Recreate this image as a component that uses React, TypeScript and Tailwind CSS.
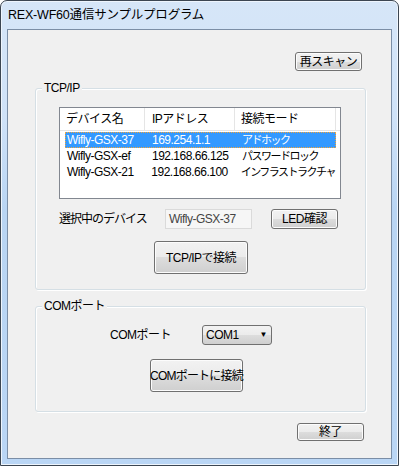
const font = { fontFamily: '"Liberation Sans", "Noto Sans CJK JP", sans-serif' };

function WinButton({ label, className }: { label: string; className: string }) {
  return (
    <button
      className={`flex items-center justify-center whitespace-nowrap rounded-[3px] border border-[#707070] text-[12px] text-black shadow-[inset_0_0_0_1px_#fcfcfc] bg-[linear-gradient(to_bottom,#f2f2f2_0%,#ebebeb_50%,#dddddd_50%,#cfcfcf_100%)] ${className}`}
    >
      {label}
    </button>
  );
}

function GroupBox({ title, className, children }: { title: string; className: string; children: React.ReactNode }) {
  return (
    <div className={`relative rounded-[3px] border border-[#d5dfe5] shadow-[inset_1px_1px_0_#ffffff,1px_1px_0_#ffffff] ${className}`}>
      <span className="absolute left-[6px] top-[-8px] bg-[#f0f0f0] px-[2px] text-[12px] leading-[14px] text-black">
        {title}
      </span>
      {children}
    </div>
  );
}

const devices = [
  { name: 'Wifly-GSX-37', ip: '169.254.1.1', mode: 'アドホック' },
  { name: 'Wifly-GSX-ef', ip: '192.168.66.125', mode: 'パスワードロック' },
  { name: 'Wifly-GSX-21', ip: '192.168.66.100', mode: 'インフラストラクチャ' },
];

export default function App() {
  return (
    <div style={font} className="h-[466px] w-[399px] bg-white tracking-[-0.5px]">
      {/* window frame */}
      <div className="flex h-[466px] w-[399px] flex-col rounded-t-[7px] border border-[#3c4652] bg-[linear-gradient(to_bottom,#d6e6f8_0%,#cfe2f8_25%,#b9d5f3_45%,#bad6f5_100%)] px-[6px] pb-[6px] shadow-[inset_0_0_0_1px_#eef5fd]">
        {/* title bar */}
        <div className="flex h-[28px] shrink-0 items-center pl-[1px] text-[12.5px] tracking-[-0.2px] text-black">
          REX-WF60通信サンプルプログラム
        </div>

        {/* client area */}
        <div className="flex flex-1 flex-col border border-[#7b8ea6] bg-[#f0f0f0] text-[12px] text-black">
          <div className="flex justify-end pr-[29px] pt-[22px]">
            <WinButton label="再スキャン" className="h-[19px] w-[67px]" />
          </div>

          {/* TCP/IP */}
          <GroupBox title="TCP/IP" className="ml-[27px] mt-[17px] h-[202px] w-[331px] pl-[23px] pt-[18px]">
            <div className="h-[92px] w-[282px] overflow-hidden border border-[#828790] bg-white">
              <div className="flex h-[23px] border-b border-[#e5e5e5] bg-white">
                <div className="flex w-[85px] items-center whitespace-nowrap border-r border-[#e5e5e5] pl-[6px]">デバイス名</div>
                <div className="flex w-[90px] items-center whitespace-nowrap border-r border-[#e5e5e5] pl-[7px]">IPアドレス</div>
                <div className="flex w-[101px] items-center whitespace-nowrap border-r border-[#e5e5e5] pl-[6px]">接続モード</div>
              </div>
              <div className="pl-[5px] pt-[1px]">
                {devices.map((d, i) => (
                  <div
                    key={d.name}
                    className={`flex h-[16px] w-[271px] items-center whitespace-nowrap leading-[14px] ${
                      i === 0 ? 'border border-dotted border-[#f3a53a] bg-[#3399ff] text-white' : 'border border-transparent'
                    }`}
                  >
                    <span className="w-[86px] pl-[1px]">{d.name}</span>
                    <span className="w-[90px]">{d.ip}</span>
                    <span className="text-[11px] tracking-[-1.5px]">{d.mode}</span>
                  </div>
                ))}
              </div>
            </div>

            <div className="mt-[10px] flex items-center">
              <span className="w-[106px] whitespace-nowrap tracking-[-1px]">選択中のデバイス</span>
              <div className="flex h-[20px] w-[87px] items-center border border-[#dadada] bg-[#f6f6f6] pl-[3px] text-[#444]">
                Wifly-GSX-37
              </div>
              <WinButton label="LED確認" className="ml-[19px] h-[20px] w-[67px]" />
            </div>

            <WinButton label="TCP/IPで接続" className="ml-[95px] mt-[12px] h-[33px] w-[94px]" />
          </GroupBox>

          {/* COM port */}
          <GroupBox title="COMポート" className="ml-[27px] mt-[16px] h-[106px] w-[331px] pt-[18px]">
            <div className="flex items-center pl-[74px]">
              <span className="w-[92px]">COMポート</span>
              <div className="flex h-[20px] w-[70px] items-center justify-between rounded-[3px] border border-[#707070] bg-[linear-gradient(to_bottom,#f2f2f2_0%,#ebebeb_50%,#dddddd_50%,#cfcfcf_100%)] pl-[3px] pr-[4px]">
                <span>COM1</span>
                <span className="text-[8px] leading-none">▼</span>
              </div>
            </div>
            <WinButton label="COMポートに接続" className="ml-[114px] mt-[14px] h-[33px] w-[93px] text-[11.5px] tracking-[-0.8px]" />
          </GroupBox>

          <div className="flex justify-end pr-[27px] pt-[11px]">
            <WinButton label="終了" className="h-[18px] w-[67px]" />
          </div>
        </div>
      </div>
    </div>
  );
}
